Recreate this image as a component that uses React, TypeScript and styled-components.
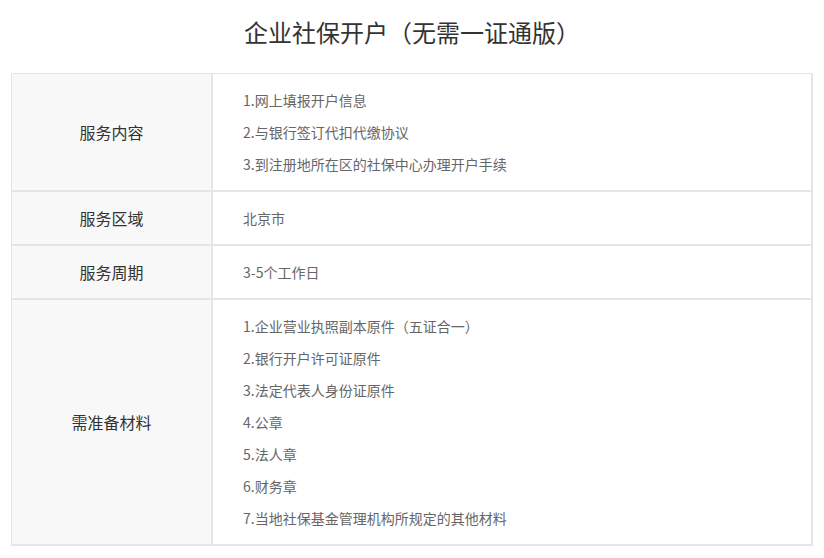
import React from 'react';
import styled, { createGlobalStyle } from 'styled-components';

const GlobalStyle = createGlobalStyle`
  body {
    margin: 0;
    background: #ffffff;
    font-family: "Microsoft YaHei", "Noto Sans CJK SC", "Noto Sans", sans-serif;
  }
`;

type Item = { label: string; lines: string[] };

const items: Item[] = [
  {
    label: '服务内容',
    lines: ['1.网上填报开户信息', '2.与银行签订代扣代缴协议', '3.到注册地所在区的社保中心办理开户手续'],
  },
  { label: '服务区域', lines: ['北京市'] },
  { label: '服务周期', lines: ['3-5个工作日'] },
  {
    label: '需准备材料',
    lines: [
      '1.企业营业执照副本原件（五证合一）',
      '2.银行开户许可证原件',
      '3.法定代表人身份证原件',
      '4.公章',
      '5.法人章',
      '6.财务章',
      '7.当地社保基金管理机构所规定的其他材料',
    ],
  },
];

const App = () => {
  return (
    <Page>
      <GlobalStyle />
      <Title>企业社保开户（无需一证通版）</Title>
      <Table>
        {items.map((item) => (
          <Row key={item.label}>
            <Label>{item.label}</Label>
            <Content>
              {item.lines.map((line) => (
                <Line key={line}>{line}</Line>
              ))}
            </Content>
          </Row>
        ))}
      </Table>
    </Page>
  );
};
export default App;

const Page = styled.div`
  width: 802px;
  padding: 0 11px;
`;

const Title = styled.h2`
  margin: 0;
  height: 73px;
  line-height: 64px;
  text-align: center;
  font-size: 24px;
  font-weight: normal;
  color: #333333;
`;

const Table = styled.div`
  border-top: 1px solid #e5e5e5;
  border-left: 1px solid #e5e5e5;
`;

const Row = styled.div`
  display: grid;
  grid-template-columns: 201px 1fr;
`;

const Label = styled.div`
  display: flex;
  align-items: center;
  justify-content: center;
  background: #f8f8f8;
  border-right: 2px solid #e5e5e5;
  border-bottom: 2px solid #e5e5e5;
  font-size: 16px;
  color: #333333;
`;

const Content = styled.div`
  padding: 10px 30px;
  border-right: 2px solid #e5e5e5;
  border-bottom: 2px solid #e5e5e5;
`;

const Line = styled.p`
  margin: 0;
  line-height: 32px;
  font-size: 14px;
  color: #666666;
`;
